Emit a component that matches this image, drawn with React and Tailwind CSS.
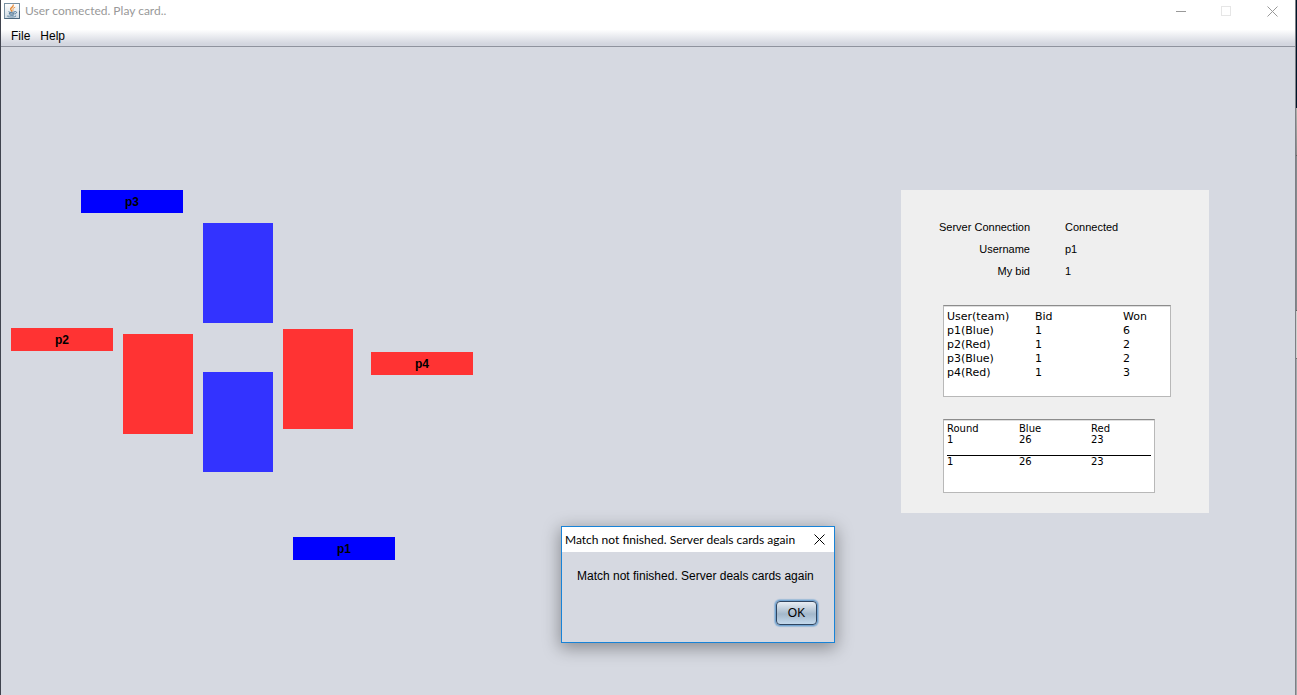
const players = [
  { name: "p3", place: "left-20 top-[143px] bg-[#0000ff]" },
  { name: "p2", place: "left-[10px] top-[281px] bg-[#ff3333]" },
  { name: "p4", place: "left-[370px] top-[305px] bg-[#ff3333]" },
  { name: "p1", place: "left-[292px] top-[490px] bg-[#0000ff]" },
];

const cards = [
  { owner: "p3", place: "left-[202px] top-44 bg-[#3333ff]" },
  { owner: "p2", place: "left-[122px] top-[287px] bg-[#ff3333]" },
  { owner: "p4", place: "left-[282px] top-[282px] bg-[#ff3333]" },
  { owner: "p1", place: "left-[202px] top-[325px] bg-[#3333ff]" },
];

const status = [
  ["Server Connection", "Connected"],
  ["Username", "p1"],
  ["My bid", "1"],
];

const bids = [
  ["p1(Blue)", "1", "6"],
  ["p2(Red)", "1", "2"],
  ["p3(Blue)", "1", "2"],
  ["p4(Red)", "1", "3"],
];

function JavaIcon() {
  return (
    <svg width="16" height="16" viewBox="0 0 16 16" aria-hidden="true">
      <defs>
        <linearGradient id="tile" x1="0" y1="0" x2="0" y2="1">
          <stop offset="0" stopColor="#ffffff" />
          <stop offset="1" stopColor="#cfdbe4" />
        </linearGradient>
      </defs>
      <rect x="0.5" y="0.5" width="15" height="15" fill="url(#tile)" stroke="#7890a2" />
      <path d="M0.5 15.5h15V8" fill="none" stroke="#4d687e" />
      <g fill="none" strokeLinecap="round">
        <path d="M9.2 2C9.8 4 6.3 4.6 6.6 6.2C6.8 7 7.6 7.4 7.6 8.2" stroke="#e8862f" strokeWidth="1.3" />
        <path d="M10.8 4.4C9 5 8.4 5.8 9 6.6C9.3 7.2 9 7.8 8.5 8.2" stroke="#ee9a4c" strokeWidth="1" />
        <path d="M4.6 8.9C4.2 9.6 8.6 9.6 10.4 9M5.2 10.6C6.4 11.2 8.8 11.1 10 10.6M5.8 12C7 12.4 8.6 12.4 9.6 12" stroke="#456f91" />
        <path d="M11 8.6C13.4 8.2 13 10.4 11 11" stroke="#456f91" />
        <path d="M4 12.6C1.8 13.4 5 14 7.6 14C10.4 14 12.8 13.5 12 12.8" stroke="#5f86a4" />
      </g>
    </svg>
  );
}

function Cross() {
  return (
    <svg width="11" height="11" viewBox="0 0 11 11" stroke="currentColor" aria-hidden="true">
      <path d="M0.5 0.5l10 10M10.5 0.5l-10 10" />
    </svg>
  );
}

function TitleBar() {
  return (
    <header className="flex h-6 items-start bg-white text-[#999999]">
      <div className="flex h-[22px] flex-1 items-center gap-1 pl-[3px]">
        <JavaIcon />
        <h1 className="pl-px font-[Lato,sans-serif] text-xs">User connected. Play card..</h1>
      </div>
      <div className="flex h-[22px]">
        <button aria-label="Minimize" className="flex w-[45px] items-center justify-center">
          <svg width="11" height="11" stroke="currentColor" aria-hidden="true"><path d="M0 5.5h10" /></svg>
        </button>
        <button aria-label="Maximize" disabled className="flex w-[45px] items-center justify-center text-[#e6e6e6]">
          <svg width="11" height="11" fill="none" stroke="currentColor" aria-hidden="true"><rect x="0.5" y="0.5" width="9" height="9" /></svg>
        </button>
        <button aria-label="Close" className="flex w-[46px] items-center justify-center">
          <Cross />
        </button>
      </div>
    </header>
  );
}

function MenuBar() {
  return (
    <nav className="flex h-[23px] items-center gap-[10px] border-b border-[#8f939e] bg-linear-to-b from-white from-25% to-[#d3d6df] to-90% pt-px pl-[10px] text-xs">
      <button>File</button>
      <button>Help</button>
    </nav>
  );
}

const sunken = "border border-[#b8b8b8] border-t-[#8c8c8c] bg-white shadow-[inset_0_1px_0_#dedede] px-[3px] font-['DejaVu_Sans',sans-serif]";

function StatusPanel() {
  return (
    <aside className="mt-[143px] mr-[86px] h-[323px] w-[308px] shrink-0 bg-[#efefef] px-[42px] pt-[26px]">
      <dl className="-ml-1 grid grid-cols-[91px_1fr] gap-x-[35px] text-[11px] leading-[22px]">
        {status.map(([label, value]) => (
          <div key={label} className="contents">
            <dt className="text-right whitespace-nowrap">{label}</dt>
            <dd>{value}</dd>
          </div>
        ))}
      </dl>
      <div className={`mt-[23px] h-[92px] w-[228px] pt-1 ${sunken}`}>
        <table className="w-full table-fixed text-left text-[11px] leading-[14px]">
          <thead>
            <tr>
              <th className="w-[88px] font-normal">User(team)</th>
              <th className="w-[88px] font-normal">Bid</th>
              <th className="font-normal">Won</th>
            </tr>
          </thead>
          <tbody>
            {bids.map((row) => (
              <tr key={row[0]}>
                {row.map((cell, i) => <td key={i}>{cell}</td>)}
              </tr>
            ))}
          </tbody>
        </table>
      </div>
      <div className={`mt-[22px] h-[74px] w-[212px] pt-[3px] ${sunken}`}>
        <table className="w-full table-fixed text-left text-[10px] leading-[11px]">
          <thead>
            <tr>
              <th className="w-[72px] font-normal">Round</th>
              <th className="w-[72px] font-normal">Blue</th>
              <th className="font-normal">Red</th>
            </tr>
          </thead>
          <tbody>
            <tr><td>1</td><td>26</td><td>23</td></tr>
          </tbody>
          <tfoot>
            <tr><td colSpan={3} className="h-[10px] border-b border-black"></td></tr>
            <tr><td>1</td><td>26</td><td>23</td></tr>
          </tfoot>
        </table>
      </div>
    </aside>
  );
}

function MatchDialog() {
  return (
    <section
      role="dialog"
      aria-labelledby="dialog-title"
      className="absolute top-[479px] left-[560px] flex h-[117px] w-[274px] flex-col border border-[#1883d7] bg-[#d6d9e1] shadow-[0_4px_16px_1px_rgba(0,0,0,0.36)]"
    >
      <div className="flex h-[25px] items-center justify-between bg-white pr-[9px] pl-[3px]">
        <h2 id="dialog-title" className="font-[Lato,sans-serif] text-xs whitespace-nowrap">
          Match not finished. Server deals cards again
        </h2>
        <button aria-label="Close dialog"><Cross /></button>
      </div>
      <div className="flex flex-1 flex-col px-[15px] pt-4">
        <p className="text-xs whitespace-nowrap">Match not finished. Server deals cards again</p>
        <button className="mt-[17px] mr-[2px] h-6 w-[41px] self-end rounded-[4px] border border-[#2f4560] bg-linear-to-b from-[#e9eef3] via-[#a3b8cb] via-55% to-[#c4d9ec] text-xs shadow-[0_0_0_1px_#73a4d1,0_0_1px_2px_#9dbbd8]">
          OK
        </button>
      </div>
    </section>
  );
}

export default function App() {
  return (
    <div className="flex min-h-screen bg-[#d6d9e1] font-['Liberation_Sans',Arial,sans-serif] text-black">
      <div className="flex min-w-0 flex-1 flex-col border-l border-[#3f434e]">
        <TitleBar />
        <MenuBar />
        <main className="relative flex flex-1 items-start justify-between">
          <div className="flex-1" aria-label="Card table">
            {players.map((p) => (
              <div key={p.name} className={`absolute flex h-[23px] w-[102px] items-center justify-center text-xs font-bold ${p.place}`}>
                {p.name}
              </div>
            ))}
            {cards.map((c) => (
              <div key={c.owner} className={`absolute h-[100px] w-[70px] ${c.place}`} />
            ))}
          </div>
          <StatusPanel />
          <MatchDialog />
        </main>
      </div>
      <div className="flex w-[2px] flex-col border-l border-[#7d8086]" aria-hidden="true">
        <div className="h-[108px] bg-[#001428]" />
        <div className="h-[47px] bg-linear-to-b from-[#b0b0ac] to-[#8a8a8a]" />
        <div className="h-[155px] border-t border-[#606060] bg-[#85898c]" />
        <div className="h-12 border-t border-[#606060] bg-[#cfcfcd]" />
        <div className="flex-1 border-t border-[#707070] bg-[#a4a9ab]" />
      </div>
    </div>
  );
}
